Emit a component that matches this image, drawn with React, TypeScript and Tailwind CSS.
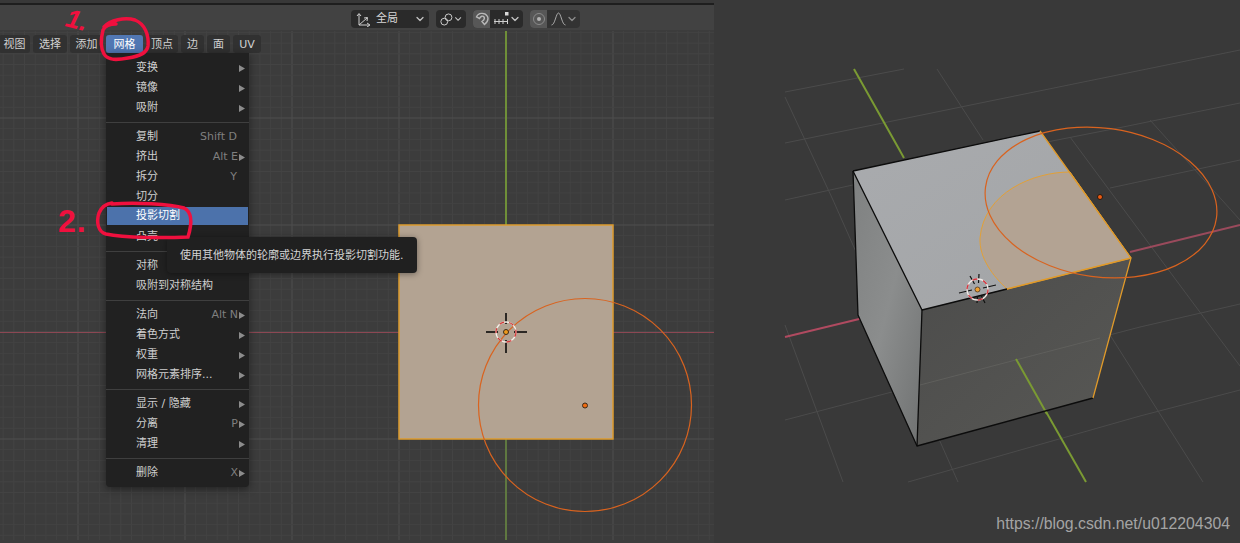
import { ChevronDown } from "lucide-react";

const uiFont = "font-['DejaVu_Sans','Noto_Sans_CJK_SC',sans-serif]";

type MenuItem = { label: string; shortcut?: string; arrow?: boolean; active?: boolean } | null;

const menuBar = [
  { label: "视图", w: "w-[31px]" },
  { label: "选择", w: "w-[34px]" },
  { label: "添加", w: "w-[33px]" },
  { label: "网格", w: "w-[37px]", active: true },
  { label: "顶点", w: "w-[32px]" },
  { label: "边", w: "w-[23px]" },
  { label: "面", w: "w-[23px]" },
  { label: "UV", w: "w-[28px]" },
];

const menuItems: MenuItem[] = [
  { label: "变换", arrow: true },
  { label: "镜像", arrow: true },
  { label: "吸附", arrow: true },
  null,
  { label: "复制", shortcut: "Shift D" },
  { label: "挤出", shortcut: "Alt E", arrow: true },
  { label: "拆分", shortcut: "Y" },
  { label: "切分" },
  { label: "投影切割", active: true },
  { label: "凸壳" },
  null,
  { label: "对称" },
  { label: "吸附到对称结构" },
  null,
  { label: "法向", shortcut: "Alt N", arrow: true },
  { label: "着色方式", arrow: true },
  { label: "权重", arrow: true },
  { label: "网格元素排序...", arrow: true },
  null,
  { label: "显示 / 隐藏", arrow: true },
  { label: "分离", shortcut: "P", arrow: true },
  { label: "清理", arrow: true },
  null,
  { label: "删除", shortcut: "X", arrow: true },
];

const steps = Array.from({ length: 67 }, (_, i) => i - 47);

function Arrow() {
  return (
    <svg width="6" height="7" viewBox="0 0 6 7" className="shrink-0">
      <path d="M0 0 L6 3.5 L0 7 Z" fill="#8c8c8c" />
    </svg>
  );
}

function Chevron({ className = "text-[#c4c4c4]" }: { className?: string }) {
  return <ChevronDown size={12} strokeWidth={2.5} className={className} />;
}

function Toolbar() {
  return (
    <div className="flex h-[25px] items-center bg-[#424242] pl-[351px] pt-[3px]">
      <div className="flex h-[18px] w-[78px] items-center rounded-[4px] bg-[#2a2a2a] pl-1 pr-[3px] text-[11px] text-[#d6d6d6]">
        <svg width="16" height="15" viewBox="0 0 16 15" fill="none" stroke="#cfcfcf" strokeWidth="1">
          <path d="M4 13 L4 2 M4 13 L14 13 M4 13 L12 6" />
          <path d="M2 4 L4 1.5 L6 4 M12 11 L15 13 L12 15 M9 6 L12.5 5.5 L12 9" />
        </svg>
        <span className="ml-[5px] flex-1">全局</span>
        <Chevron />
      </div>
      <div className="ml-[7px] flex h-[18px] w-[30px] items-center justify-between rounded-[4px] bg-[#2a2a2a] pl-1 pr-[3px]">
        <svg width="15" height="15" viewBox="0 0 15 15" fill="none" stroke="#d4d4d4" strokeWidth="1.1">
          <circle cx="10" cy="5" r="4" />
          <circle cx="5" cy="10" r="4" />
        </svg>
        <Chevron />
      </div>
      <div className="ml-[7px] flex h-[18px] w-[50px] items-center overflow-hidden rounded-[4px] bg-[#2a2a2a]">
        <div className="flex h-full w-[19px] items-center justify-center bg-[#575757]">
          <svg width="14" height="14" viewBox="0 0 14 14" fill="none" stroke="#b8b8b8" strokeWidth="1.4">
            <path d="M1.5 5 C3 0.5 10 0 12.5 4.5 C14 8 12 10.5 9.5 12.5 L7 9.5 C9 8 10 6.5 9 5 C8 3.5 5.5 4 4.5 6.5 Z" />
          </svg>
        </div>
        <div className="flex flex-1 items-center justify-between pl-1 pr-[2px]">
          <svg width="15" height="14" viewBox="0 0 15 14" fill="none" stroke="#cfcfcf" strokeWidth="1">
            <path d="M0 9.5 H14 M1 7 V12 M5 7 V12 M9 7 V12 M13.500 7 V12" />
            <rect x="11" y="0" width="3.500" height="3.500" fill="#d8d8d8" stroke="none" />
          </svg>
          <Chevron />
        </div>
      </div>
      <div className="ml-[7px] flex h-[18px] w-[50px] items-center overflow-hidden rounded-[4px] bg-[#333333]">
        <div className="flex h-full w-[18px] items-center justify-center bg-[#575757]">
          <svg width="14" height="14" viewBox="0 0 14 14" fill="none">
            <circle cx="7" cy="7" r="5.500" stroke="#8a8a8a" strokeWidth="1" />
            <circle cx="7" cy="7" r="2" fill="#b4b4b4" />
          </svg>
        </div>
        <div className="flex flex-1 items-center justify-between pl-1 pr-[2px]">
          <svg width="15" height="14" viewBox="0 0 15 14" fill="none" stroke="#a8a8a8" strokeWidth="1">
            <path d="M0.500 13 C4 13 5 1 7.500 1 C10 1 11 13 14.500 13" />
          </svg>
          <Chevron className="text-[#8e8e8e]" />
        </div>
      </div>
    </div>
  );
}

function MenuBar() {
  return (
    <div className="-ml-px mt-[5px] flex h-[18px] gap-[3px] text-[11px] leading-[20px] text-[#d2d2d2]">
      {menuBar.map((m) => (
        <div
          key={m.label}
          className={
            m.active
              ? `${m.w} rounded-[3px] bg-[#5177b3] text-center text-white`
              : `${m.w} rounded-[3px] bg-[#313131] text-center`
          }
        >
          {m.label}
        </div>
      ))}
    </div>
  );
}

function Dropdown() {
  return (
    <div className="absolute left-[106px] top-[53px] flex w-[143px] flex-col rounded-b-[4px] bg-[#212121] pb-[5px] pt-1 text-[11px] shadow-[0_2px_8px_rgba(0,0,0,0.45)]">
      {menuItems.map((item, i) =>
        item === null ? (
          <div key={i} className="h-[9px] pt-[5px]">
            <div className="h-px w-full bg-[#3f3f3f]" />
          </div>
        ) : (
          <div
            key={i}
            className={
              item.active
                ? "mx-px my-px flex h-[18px] items-center bg-[#4c72ab] pl-[29px] pr-[3px] pt-px text-white"
                : "flex h-5 items-center pl-[30px] pr-1 pt-[2px] text-[#cfcfcf]"
            }
          >
            <span className="flex-1 whitespace-nowrap">{item.label}</span>
            {item.shortcut && <span className="text-[#7f7f7f]">{item.shortcut}</span>}
            {item.arrow && (
              <span className="ml-px">
                <Arrow />
              </span>
            )}
            {!item.arrow && item.shortcut && <span className="w-[8px]" />}
          </div>
        )
      )}
    </div>
  );
}

function Tooltip() {
  return (
    <div className="absolute left-[167px] top-[237px] flex h-[36px] w-[250px] items-center rounded-[4px] bg-[#202020] pl-[13px] pt-[2px] text-[11px] text-[#d4d4d4] shadow-[0_1px_6px_rgba(0,0,0,0.4)]">
      使用其他物体的轮廓或边界执行投影切割功能.
    </div>
  );
}

function Cursor({ x, y }: { x: number; y: number }) {
  return (
    <g>
      <path
        d={`M${x - 20} ${y} H${x - 8} M${x + 8} ${y} H${x + 21} M${x} ${y - 19} V${y - 8} M${x} ${y + 8} V${y + 21}`}
        stroke="#000"
        strokeWidth="1.500"
      />
      <circle cx={x} cy={y} r="10" fill="none" stroke="#f4efe9" strokeWidth="1.300" />
      <circle cx={x} cy={y} r="10" fill="none" stroke="#d33b3b" strokeWidth="1.300" strokeDasharray="5 5" />
      <circle cx={x} cy={y} r="2.500" fill="#ee9a1c" stroke="#3a2a18" strokeWidth="1" />
    </g>
  );
}

function LeftCanvas() {
  return (
    <svg className="absolute inset-0" width="714" height="543" viewBox="0 0 714 543">
      {steps.map((k) => {
        const major = (k + 100) % 10 === 0;
        const vx = 506 + k * 10.7;
        return (
          <line key={k} x1={vx} y1="31" x2={vx} y2="540" stroke={major ? "#4f4f4f" : "#434343"} strokeWidth="1" />
        );
      })}
      {steps.map((k) => {
        const major = (k + 100) % 10 === 0;
        const hy = 332 + k * 10.7;
        if (hy < 31 || hy > 540) return null;
        return <line key={k} x1="0" y1={hy} x2="714" y2={hy} stroke={major ? "#4f4f4f" : "#434343"} strokeWidth="1" />;
      })}
      <line x1="0" y1="332.500" x2="714" y2="332.500" stroke="#8c4753" strokeWidth="1.200" />
      <line x1="506" y1="31" x2="506" y2="225" stroke="#6f8f38" strokeWidth="2" />
      <line x1="506" y1="439" x2="506" y2="540" stroke="#5f7840" strokeWidth="2" />
      <rect x="399" y="225" width="214" height="214" fill="#b3a392" stroke="#dc9a2c" strokeWidth="1.500" />
      <circle cx="585" cy="405" r="106.500" fill="none" stroke="#d9631f" strokeWidth="1.200" />
      <Cursor x={506} y={332} />
      <circle cx="585" cy="405.500" r="2.500" fill="#ee6a10" stroke="#3a2a18" strokeWidth="1" />
    </svg>
  );
}

function RightCanvas() {
  return (
    <svg className="absolute inset-0" width="526" height="543" viewBox="714 0 526 543">
      <defs>
        <linearGradient id="topFace" x1="0" y1="0" x2="1" y2="1">
          <stop offset="0" stopColor="#a9abae" />
          <stop offset="1" stopColor="#a2a4a6" />
        </linearGradient>
        <linearGradient id="leftFace" x1="0" y1="0" x2="1" y2="1">
          <stop offset="0" stopColor="#7f8181" />
          <stop offset="0.5" stopColor="#8b8d8d" />
          <stop offset="1" stopColor="#6f7171" />
        </linearGradient>
        <linearGradient id="frontFace" x1="0" y1="0" x2="1" y2="1">
          <stop offset="0" stopColor="#4c4c4b" />
          <stop offset="1" stopColor="#585855" />
        </linearGradient>
      </defs>
      <g stroke="#4b4b4b" strokeWidth="1" fill="none">
        <path d="M785 92 L904 69" />
        <path d="M785 143 L1000 99 L1240 50" />
        <path d="M785 200 L1047 142 L1123 127 L1240 103" />
        <path d="M1110 188 L1240 160" />
        <path d="M785 420 L1140 327 L1240 304" />
        <path d="M908 482 L1140 416 L1240 390" />
        <path d="M785 97 L833 200 L958 482" />
        <path d="M937 69 L983 140" />
        <path d="M1070 137 L1150 245 L1240 366" />
        <path d="M1150 120 L1240 220" />
        <path d="M785 325 L843 482" />
        <path d="M1110 335 L1203 482" />
      </g>
      <path d="M854 69 L904 158" stroke="#7a9a33" strokeWidth="2" />
      <path d="M1016 359 L1086 482" stroke="#7a9a33" strokeWidth="2" />
      <path d="M785 337 L886 312.500" stroke="#b04a60" strokeWidth="2" />
      <path d="M1130 252 L1240 225" stroke="#9a4a5c" strokeWidth="2" />

      <polygon points="853,171 922,310 917,446 858,315" fill="url(#leftFace)" />
      <polygon points="922,310 1131,258 1093,398 917,446" fill="url(#frontFace)" />
      <path d="M920 385 L1100 338" stroke="#5f5f5c" strokeWidth="1" />
      <path d="M1016 359 L1047 414" stroke="#7a9a33" strokeWidth="2" />
      <polygon points="853,171 1040,131 1131,258 922,310" fill="url(#topFace)" />
      <path
        d="M1070 172 C1034 172 984 192 980 238 C979 258 993 276 1007 289 L1131 258 Z"
        fill="#b3a393"
        stroke="#e3a036"
        strokeWidth="1"
      />
      <g stroke="#0c0c0c" strokeWidth="1.300" fill="none" strokeLinejoin="round">
        <path d="M853 171 L1040 131" />
        <path d="M853 171 L922 310 L1007 289" />
        <path d="M853 171 L858 315 L917 446" />
        <path d="M922 310 L917 446 L1093 398" />
      </g>
      <path d="M1040 131 L1131 258 L1093 398" stroke="#e09a2a" strokeWidth="1.300" fill="none" />
      <path d="M1131 258 L1007 289" stroke="#e09a2a" strokeWidth="1.300" fill="none" />
      <ellipse
        cx="1101"
        cy="202.500"
        rx="116.500"
        ry="74.500"
        transform="rotate(7.600 1101 202.500)"
        fill="none"
        stroke="#d9631f"
        strokeWidth="1.200"
      />
      <circle cx="1100" cy="197" r="2.500" fill="#ee5a10" stroke="#241a12" strokeWidth="1" />
      <g stroke="#111" strokeWidth="1.200">
        <path d="M959 293 L972 290 M983 288 L996 285 M970 276 L974.500 284 M981 295 L985 303 M979 274 L978.500 283 M977.500 296 L977 303" />
      </g>
      <ellipse cx="977.500" cy="289.500" rx="10.500" ry="10.500" fill="none" stroke="#efe9e6" strokeWidth="1.300" />
      <ellipse cx="977.500" cy="289.500" rx="10.500" ry="10.500" fill="none" stroke="#d3303a" strokeWidth="1.300" strokeDasharray="5 6" />
      <circle cx="977.500" cy="289.500" r="2.500" fill="#f0a030" stroke="#4a3520" strokeWidth="0.800" />
    </svg>
  );
}

// red marks somebody drew over the screenshot
function Annotations() {
  return (
    <>
      <svg className="absolute inset-0" width="714" height="543" viewBox="0 0 714 543" fill="none">
        <path
          d="M104 27 C110 20 125 17 135 20 C145 24 149 35 148 46 C147 53 140 56 128 58 C118 60 108 61 104 54 C100 47 101 38 103 30 C105 26 110 24 116 24"
          stroke="#f0103e"
          strokeWidth="3.500"
          strokeLinecap="round"
        />
        <path
          d="M112 204 C135 202 170 204 184 208 C192 212 192 224 188 237 C165 238 125 238 106 234 C98 232 96 222 99 213 C101 208 105 204 112 203"
          stroke="#f0103e"
          strokeWidth="3.500"
          strokeLinecap="round"
        />
      </svg>
      <span className="absolute left-[66px] top-[8px] h-[24px] rotate-[14deg] font-['Liberation_Sans',sans-serif] text-[26px] font-bold italic leading-[24px] text-[#f0103e]">
        1.
      </span>
      <span className="absolute left-[58px] top-[205px] font-['Liberation_Sans',sans-serif] text-[32px] font-bold leading-none tracking-[1px] text-[#f0103e]">
        2.
      </span>
    </>
  );
}

export default function App() {
  return (
    <div className={`flex h-[543px] w-[1240px] overflow-hidden bg-[#393939] ${uiFont}`}>
      <div className="relative h-full w-[714px] shrink-0 bg-[#3c3c3c]">
        <LeftCanvas />
        <div className="relative flex flex-col">
          <div className="h-[3px] bg-[#383838]" />
          <div className="h-[2px] bg-[#1e1e1e]" />
          <Toolbar />
          <MenuBar />
        </div>
        <Dropdown />
        <Tooltip />
        <Annotations />
      </div>
      <div className="relative h-full flex-1">
        <RightCanvas />
        <span className="absolute bottom-[10px] right-[10px] font-['Liberation_Sans',sans-serif] text-[15.800px] leading-[18px] text-[#a4a4a4]">
          https://blog.csdn.net/u012204304
        </span>
      </div>
    </div>
  );
}
